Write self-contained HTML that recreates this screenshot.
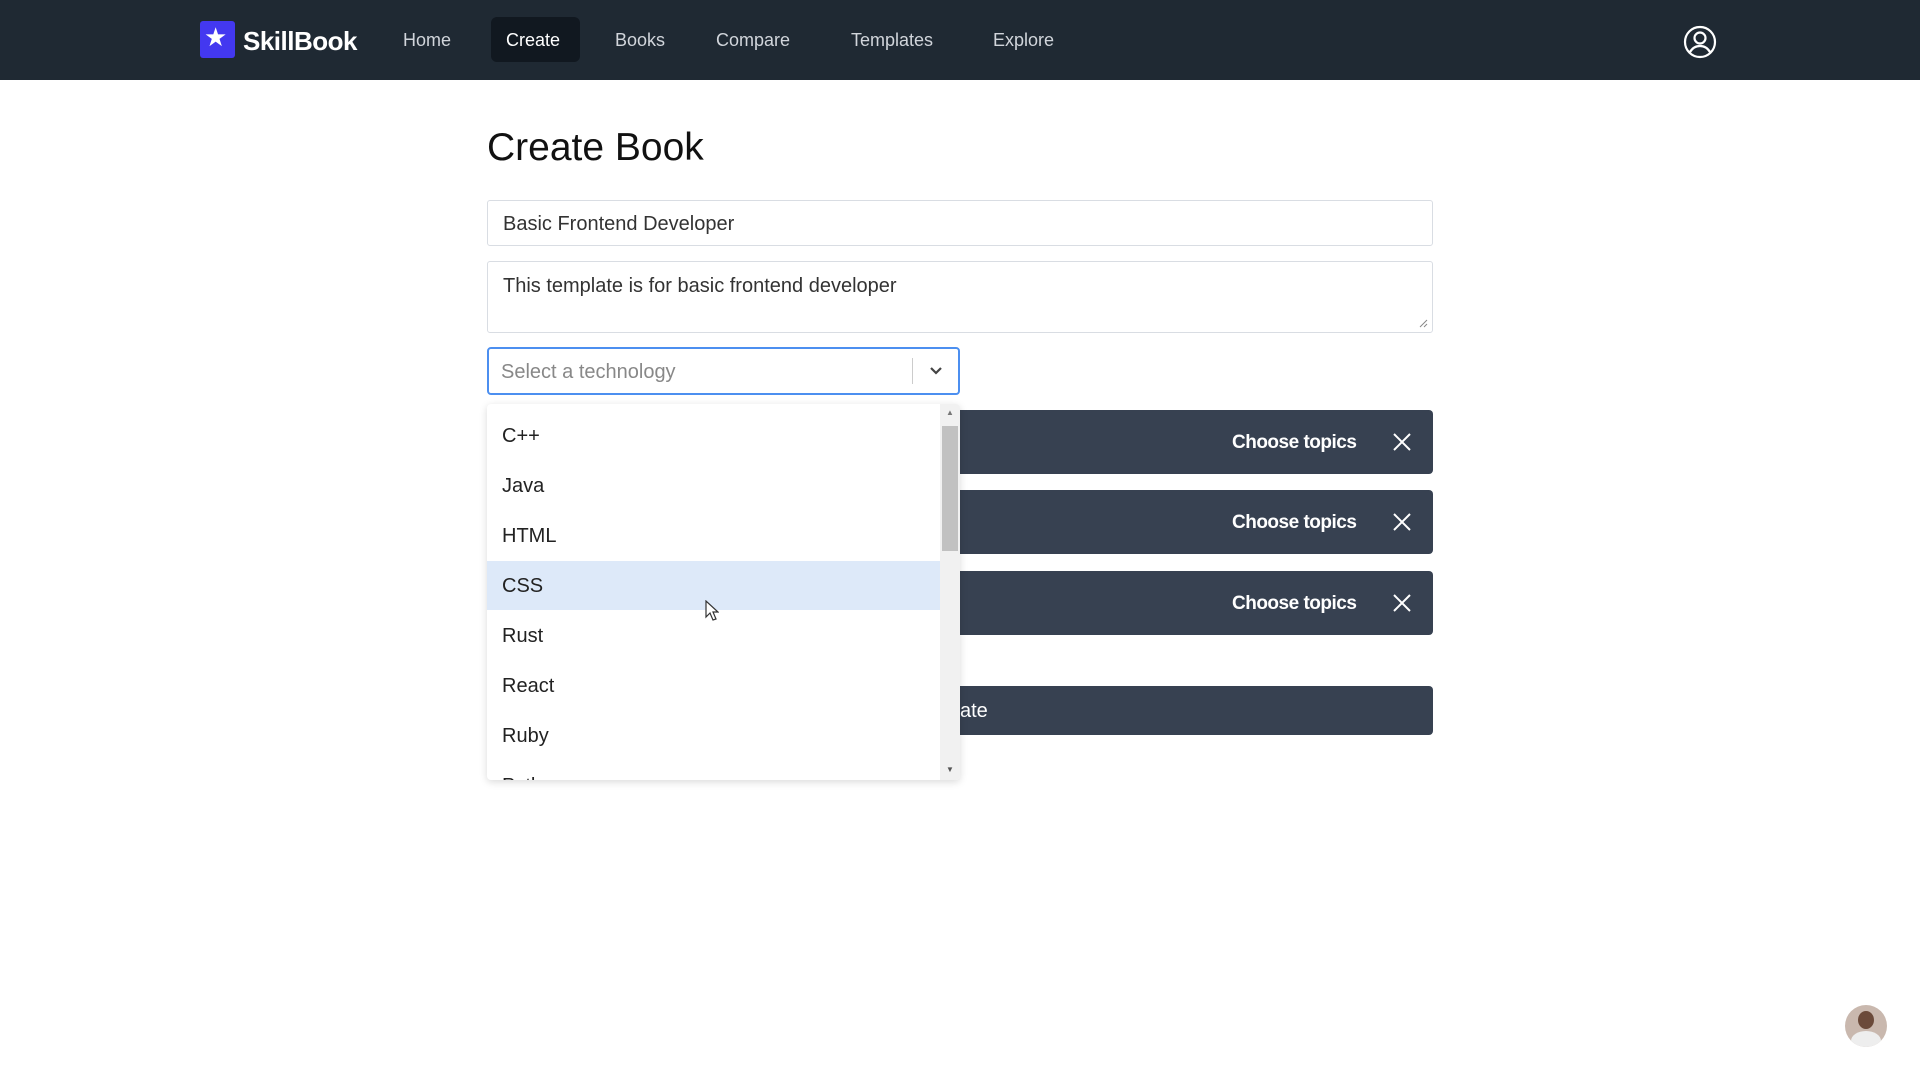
<!DOCTYPE html>
<html><head><meta charset="utf-8"><style>
*{box-sizing:border-box;margin:0;padding:0}
body{width:1920px;height:1080px;background:#fff;font-family:"Liberation Sans",sans-serif;position:relative;overflow:hidden}
.nav{position:absolute;left:0;top:0;width:1920px;height:80px;background:#1f2933}
.abs{position:absolute}
.navi{position:absolute;top:30px;font-size:18px;color:#d1d5db}
.bar{position:absolute;left:487px;width:946px;height:64px;background:#374151;border-radius:4px}
.bar .ct{position:absolute;left:745px;top:22px;color:#fff;font-weight:bold;font-size:19px;letter-spacing:-0.5px}
.bar svg{position:absolute;left:905px;top:22px}
.item{position:absolute;left:15px;font-size:20px;color:#222}
</style></head><body>
<div class="nav">
  <div class="abs" style="left:200px;top:21px;width:35px;height:37px;background:#4338f0;border-radius:3px"></div>
  <div class="abs" style="left:204px;top:22px;color:#fff;font-size:26px">★</div>
  <div class="abs" style="left:243px;top:26px;color:#fff;font-size:26px;font-weight:bold;letter-spacing:-0.5px">SkillBook</div>
  <div class="navi" style="left:403px">Home</div>
  <div class="abs" style="left:491px;top:17px;width:89px;height:45px;background:#111820;border-radius:6px"></div>
  <div class="navi" style="left:506px;color:#fff">Create</div>
  <div class="navi" style="left:615px">Books</div>
  <div class="navi" style="left:716px">Compare</div>
  <div class="navi" style="left:851px">Templates</div>
  <div class="navi" style="left:993px">Explore</div>
  <svg class="abs" style="left:1683px;top:25px" width="34" height="34" viewBox="0 0 34 34" fill="none" stroke="#fff" stroke-width="2.2"><circle cx="17" cy="17" r="15"/><circle cx="17" cy="13" r="5.5"/><path d="M7 27c3-5 7-6 10-6s7 1 10 6"/></svg>
</div>
<div class="abs" style="left:487px;top:126px;font-size:39px;color:#111">Create Book</div>
<div class="abs" style="left:487px;top:200px;width:946px;height:46px;border:1px solid #d9dde3;border-radius:3px;font-size:20px;color:#333;padding:12px 15px">Basic Frontend Developer</div>
<div class="abs" style="left:487px;top:261px;width:946px;height:72px;border:1px solid #d9dde3;border-radius:3px;font-size:20px;color:#333;padding:13px 15px">This template is for basic frontend developer
  <svg class="abs" style="left:930px;top:56px" width="10" height="10" viewBox="0 0 10 10" stroke="#888" stroke-width="1"><path d="M9 2L2 9M9 6L6 9"/></svg>
</div>
<div class="abs" style="left:487px;top:347px;width:473px;height:48px;border:2px solid #4c8ff0;border-radius:4px;font-size:20px;color:#888;padding:12px 12px">Select a technology
  <div class="abs" style="left:423px;top:9px;width:1px;height:26px;background:#ccc"></div>
  <svg class="abs" style="left:440px;top:17px" width="14" height="10" viewBox="0 0 14 10" fill="none" stroke="#444" stroke-width="2.2"><path d="M2 2l5 5 5-5"/></svg>
</div>
<div class="bar" style="top:410px"><div class="ct">Choose topics</div><svg width="20" height="20" viewBox="0 0 20 20" stroke="#fff" stroke-width="2"><path d="M2 2l16 16M18 2L2 18"/></svg></div>
<div class="bar" style="top:490px"><div class="ct">Choose topics</div><svg width="20" height="20" viewBox="0 0 20 20" stroke="#fff" stroke-width="2"><path d="M2 2l16 16M18 2L2 18"/></svg></div>
<div class="bar" style="top:571px"><div class="ct">Choose topics</div><svg width="20" height="20" viewBox="0 0 20 20" stroke="#fff" stroke-width="2"><path d="M2 2l16 16M18 2L2 18"/></svg></div>
<div class="bar" style="top:686px;height:49px"><div class="abs" style="left:473px;top:14px;color:#fff;font-size:20px">ate</div></div>
<div class="abs" style="left:487px;top:404px;width:473px;height:376px;background:#fff;border-radius:4px;box-shadow:0 2px 8px rgba(0,0,0,.15);overflow:hidden">
  <div class="abs" style="left:0;top:157px;width:453px;height:49px;background:#dde9f9"></div>
  <div class="item" style="top:21px">C++</div>
  <div class="item" style="top:71px">Java</div>
  <div class="item" style="top:121px">HTML</div>
  <div class="item" style="top:171px">CSS</div>
  <div class="item" style="top:221px">Rust</div>
  <div class="item" style="top:271px">React</div>
  <div class="item" style="top:321px">Ruby</div>
  <div class="item" style="top:371px">Python</div>
  <div class="abs" style="left:453px;top:0;width:20px;height:376px;background:#f1f1f1"></div>
  <div class="abs" style="left:455px;top:22px;width:16px;height:125px;background:#c1c1c1"></div>
  <div class="abs" style="left:459px;top:4px;font-size:8px;color:#777">▲</div>
  <div class="abs" style="left:459px;top:361px;font-size:8px;color:#555">▼</div>
</div>
<svg class="abs" style="left:705px;top:600px" width="14" height="22" viewBox="0 0 14 22"><path d="M1 1v16l4-4 3 7 3-1-3-7h5z" fill="#fff" stroke="#333" stroke-width="1.2"/></svg>
<div class="abs" style="left:1845px;top:1005px;width:42px;height:42px;border-radius:50%;background:#c9b8ae;overflow:hidden"><div class="abs" style="left:13px;top:6px;width:16px;height:18px;border-radius:50%;background:#6b4a3a"></div><div class="abs" style="left:6px;top:26px;width:30px;height:20px;border-radius:50% 50% 0 0;background:#eee"></div></div>
</body></html>
